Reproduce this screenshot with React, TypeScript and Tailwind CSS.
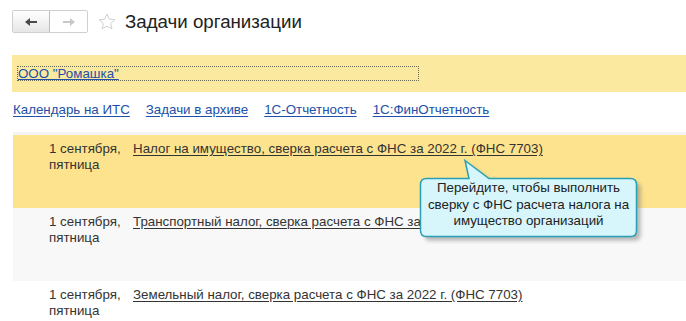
import React from "react";

const font = { fontFamily: '"Liberation Sans", Arial, sans-serif' };

function Row({ bg, title }: { bg: string; title: string }) {
  return (
    <div className={`flex ${bg} h-[73px] pt-[6px] text-[13.33px] leading-[16px] text-[#333]`}>
      <div className="w-[36px] shrink-0" />
      <div className="w-[84px] shrink-0">
        1 сентября,
        <br />
        пятница
      </div>
      <div>
        <a className="underline underline-offset-[2px] text-[#333] whitespace-nowrap">{title}</a>
      </div>
    </div>
  );
}

export default function App() {
  return (
    <div className="relative w-[686px] h-[321px] bg-white overflow-hidden" style={font}>
      {/* header */}
      <div className="flex items-center pl-[12px] pt-[10px] h-[33px]">
        <div className="flex h-[23px] border border-[#cfcfcf] rounded-[2px] overflow-hidden">
          <div className="w-[37px] flex items-center justify-center bg-gradient-to-b from-white to-[#e6e6e6] border-r border-[#bdbdbd]">
            <svg width="14" height="10" viewBox="0 0 14 10">
              <path d="M1 5 L6 1 L6 4 L13 4 L13 6 L6 6 L6 9 Z" fill="#4a4a4a" />
            </svg>
          </div>
          <div className="w-[37px] flex items-center justify-center bg-white">
            <svg width="14" height="10" viewBox="0 0 14 10">
              <path d="M13 5 L8 1 L8 4 L1 4 L1 6 L8 6 L8 9 Z" fill="#c8c8c8" />
            </svg>
          </div>
        </div>
        <svg className="ml-[9px]" width="20" height="20" viewBox="0 0 24 24">
          <path
            d="M12 2.5 L14.8 8.6 L21.4 9.3 L16.4 13.8 L17.9 20.3 L12 17 L6.1 20.3 L7.6 13.8 L2.6 9.3 L9.2 8.6 Z"
            fill="none"
            stroke="#d0d0d0"
            strokeWidth="1.2"
            strokeLinejoin="round"
          />
        </svg>
        <div className="ml-[8px] text-[18.7px] text-[#222] leading-[22px]">Задачи организации</div>
      </div>

      {/* org band */}
      <div className="mt-[22px] ml-[12px] h-[37px] bg-[#fbe9a0] flex items-center pl-[5px]">
        <div className="w-[402px] h-[15px] border border-dotted border-[#6b6b55] flex items-center">
          <a className="text-[13.33px] leading-[13px] text-[#2150a8] underline underline-offset-[1px]">ООО "Ромашка"</a>
        </div>
      </div>

      {/* links */}
      <div className="flex gap-[16px] ml-[13px] mt-[10px] text-[13.33px] leading-[16px] text-[#2150a8] h-[20px]">
        <a className="underline underline-offset-[2px]">Календарь на ИТС</a>
        <a className="underline underline-offset-[2px]">Задачи в архиве</a>
        <a className="underline underline-offset-[2px]">1С-Отчетность</a>
        <a className="underline underline-offset-[2px]">1С:ФинОтчетность</a>
      </div>

      {/* list */}
      <div className="ml-[13px] mt-[10px] border-t-[3px] border-[#f4f4f4]">
        <Row bg="bg-[#fde38d]" title="Налог на имущество, сверка расчета с ФНС за 2022 г. (ФНС 7703)" />
        <Row bg="bg-[#f8f8f8]" title="Транспортный налог, сверка расчета с ФНС за 2022 г. (ФНС 7703)" />
        <Row bg="bg-white" title="Земельный налог, сверка расчета с ФНС за 2022 г. (ФНС 7703)" />
      </div>

      {/* tooltip */}
      <div className="absolute left-[414px] top-[158px] w-[232px] h-[86px]">
        <svg className="absolute inset-0" width="232" height="86" viewBox="0 0 232 86">
          <defs>
            <filter id="sh" x="-10%" y="-10%" width="130%" height="140%">
              <feGaussianBlur stdDeviation="2" />
            </filter>
          </defs>
          <path
            d="M14.5 20.5 L55 20.5 L51 2.5 L75 20.5 L216.5 20.5 Q222.5 20.5 222.5 26.5 L222.5 72.5 Q222.5 78.5 216.5 78.5 L12.5 78.5 Q6.5 78.5 6.5 72.5 L6.5 26.5 Q6.5 20.5 12.5 20.5 Z"
            fill="#7a7a7a"
            opacity="0.55"
            filter="url(#sh)"
            transform="translate(4 4)"
          />
          <path
            d="M14.5 20.5 L55 20.5 L51 2.5 L75 20.5 L216.5 20.5 Q222.5 20.5 222.5 26.5 L222.5 72.5 Q222.5 78.5 216.5 78.5 L12.5 78.5 Q6.5 78.5 6.5 72.5 L6.5 26.5 Q6.5 20.5 12.5 20.5 Z"
            fill="#d6f6fc"
            stroke="#2a9fb4"
            strokeWidth="1.5"
          />
        </svg>
        <div className="absolute left-[6px] top-[22px] w-[217px] text-center text-[13.33px] leading-[16.5px] text-[#222]">
          Перейдите, чтобы выполнить
          <br />
          сверку с ФНС расчета налога на
          <br />
          имущество организаций
        </div>
      </div>
    </div>
  );
}
